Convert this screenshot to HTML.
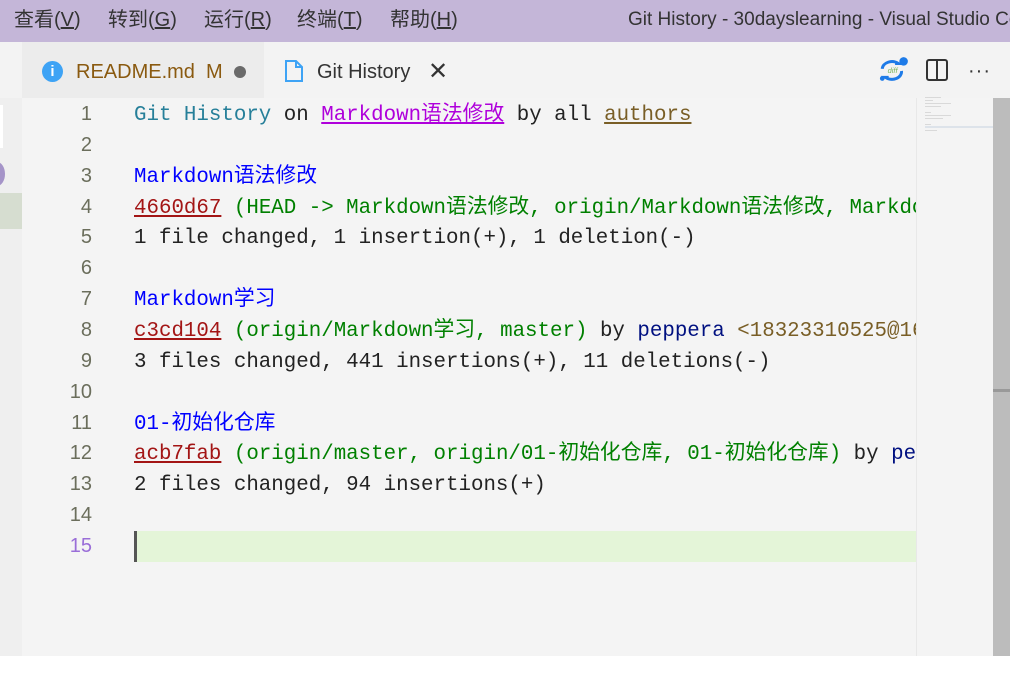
<!DOCTYPE html>
<html><head><meta charset="utf-8"><style>
*{margin:0;padding:0;box-sizing:border-box}
body{width:1010px;height:674px;overflow:hidden;background:#fff;position:relative;font-family:"Liberation Sans","Noto Sans CJK SC",sans-serif}
.title{position:absolute;left:0;top:0;width:1010px;height:42px;background:#c4b6d8;color:#333;font-size:20px}
.title span{position:absolute;top:1px;line-height:38px}
.tabs{position:absolute;left:0;top:42px;width:1010px;height:56px;background:#f3f3f3}
.left{position:absolute;left:0;top:98px;width:22px;height:558px;background:#efefef}
.editor{position:absolute;left:22px;top:98px;width:894px;height:558px;background:#f4f4f4}
.mini{position:absolute;left:916px;top:98px;width:77px;height:558px;background:#f4f4f4;border-left:1px solid #e8e8e8}
.sb{position:absolute;left:993px;top:98px;width:17px;height:558px;background:#bcbcbc}
.ln{position:absolute;left:22px;width:70px;text-align:right;font-family:"Liberation Sans",sans-serif;font-size:20px;color:#6b6e5c;line-height:31px;height:31px}
.code{position:absolute;left:0;font-family:"Liberation Mono","Noto Sans CJK SC",monospace;font-size:20.8px;white-space:pre;color:#222;line-height:31px;height:31px}
.u{text-decoration:underline}
</style></head><body>
<div class="title">
<span style="left:14px">查看(<u>V</u>)</span><span style="left:108px">转到(<u>G</u>)</span><span style="left:204px">运行(<u>R</u>)</span><span style="left:297px">终端(<u>T</u>)</span><span style="left:390px">帮助(<u>H</u>)</span>
<span style="left:628px;white-space:nowrap;font-size:19px">Git History - 30dayslearning - Visual Studio Code</span>
</div>
<div class="tabs">
<div style="position:absolute;left:22px;top:0;width:242px;height:56px;background:#ececec"></div>
<div style="position:absolute;left:42px;top:19px;width:21px;height:21px;border-radius:50%;background:#3ea3f5;color:#fff;font-size:15px;font-weight:bold;text-align:center;line-height:21px">i</div>
<div style="position:absolute;left:76px;top:19px;font-size:20px;color:#8a5a10">README.md&nbsp; M</div>
<div style="position:absolute;left:234px;top:24px;width:12px;height:12px;border-radius:50%;background:#6a6a6a"></div>
<svg style="position:absolute;left:284px;top:17px" width="20" height="24" viewBox="0 0 20 24"><path d="M2 2h10l6 6v14H2z M12 2v6h6" fill="none" stroke="#3ea3f5" stroke-width="2"/></svg>
<div style="position:absolute;left:317px;top:19px;font-size:20px;color:#333">Git History</div>
<div style="position:absolute;left:428px;top:15px;font-size:24px;color:#333">✕</div>
<svg style="position:absolute;left:878px;top:13px" width="32" height="32" viewBox="0 0 30 30"><path d="M4 13a9 7 0 0 1 15-5l-3 0M22 15a9 7 0 0 1-15 6l3 0" fill="none" stroke="#1e7be8" stroke-width="2.8"/><circle cx="24" cy="6" r="4" fill="#1e7be8"/><circle cx="4" cy="22" r="2.2" fill="#1e7be8"/><text x="9" y="17" font-size="7" fill="#7ab55c" font-style="italic" font-family="Liberation Sans">diff</text></svg>
<svg style="position:absolute;left:926px;top:17px" width="22" height="22"><rect x="1" y="1" width="20" height="20" rx="2" fill="none" stroke="#333" stroke-width="2"/><line x1="11" y1="1" x2="11" y2="21" stroke="#333" stroke-width="2"/></svg>
<div style="position:absolute;left:968px;top:18px;font-size:20px;color:#333;letter-spacing:1px">···</div>
</div>
<div class="left">
<div style="position:absolute;left:0;top:7px;width:3px;height:43px;background:#fff"></div>
<div style="position:absolute;left:-11px;top:64px;width:16px;height:24px;border-radius:50%;background:#a594c8"></div>
<div style="position:absolute;left:0;top:95px;width:22px;height:36px;background:#d6ddd0"></div>
</div>
<div class="editor"></div>
<div style="position:absolute;left:137px;top:531px;width:779px;height:31px;background:#e4f5d8"></div>
<div style="position:absolute;left:134px;top:531px;width:3px;height:31px;background:#555"></div>
<div class="mini">
<div style="position:absolute;left:8px;top:0;width:68px;height:30px;font-size:2px;color:#888;line-height:3px">━━━━━━━━<br>━━━━<br>━━━━━━━━━━━━━<br>━━━━━━━━<br><br>━━━<br>━━━━━━━━━━━━━<br>━━━━━━━━━<br><br>━━━<br>━━━━━━━━━━━━━<br>━━━━━━</div>
<div style="position:absolute;left:8px;top:28px;width:68px;height:2px;background:#dde3ea"></div>
</div>
<div class="sb"><div style="position:absolute;left:0;top:291px;width:17px;height:3px;background:#999"></div></div>
<div class="ln" style="top:99px">1</div><div class="ln" style="top:130px">2</div><div class="ln" style="top:161px">3</div><div class="ln" style="top:192px">4</div><div class="ln" style="top:222px">5</div><div class="ln" style="top:253px">6</div><div class="ln" style="top:284px">7</div><div class="ln" style="top:315px">8</div><div class="ln" style="top:346px">9</div><div class="ln" style="top:377px">10</div><div class="ln" style="top:408px">11</div><div class="ln" style="top:438px">12</div><div class="ln" style="top:469px">13</div><div class="ln" style="top:500px">14</div><div class="ln" style="top:531px;color:#9a6ed8">15</div>
<div style="position:absolute;left:134px;top:100px;width:782px;height:468px;overflow:hidden">
<div class="code" style="top:0"><span style="color:#267f99">Git History</span> on <span class="u" style="color:#af00db">Markdown语法修改</span> by all <span class="u" style="color:#795e26">authors</span></div>
<div class="code" style="top:62px;color:#0000ff">Markdown语法修改</div>
<div class="code" style="top:93px"><span class="u" style="color:#a31515">4660d67</span> <span style="color:#008000">(HEAD -&gt; Markdown语法修改, origin/Markdown语法修改, Markdown</span></div>
<div class="code" style="top:123px">1 file changed, 1 insertion(+), 1 deletion(-)</div>
<div class="code" style="top:185px;color:#0000ff">Markdown学习</div>
<div class="code" style="top:216px"><span class="u" style="color:#a31515">c3cd104</span> <span style="color:#008000">(origin/Markdown学习, master)</span> by <span style="color:#001080">peppera</span> <span style="color:#795e26">&lt;18323310525@163.com&gt;</span></div>
<div class="code" style="top:247px">3 files changed, 441 insertions(+), 11 deletions(-)</div>
<div class="code" style="top:309px;color:#0000ff">01-初始化仓库</div>
<div class="code" style="top:339px"><span class="u" style="color:#a31515">acb7fab</span> <span style="color:#008000">(origin/master, origin/01-初始化仓库, 01-初始化仓库)</span> by <span style="color:#001080">peppera</span></div>
<div class="code" style="top:370px">2 files changed, 94 insertions(+)</div>
</div>
</body></html>
